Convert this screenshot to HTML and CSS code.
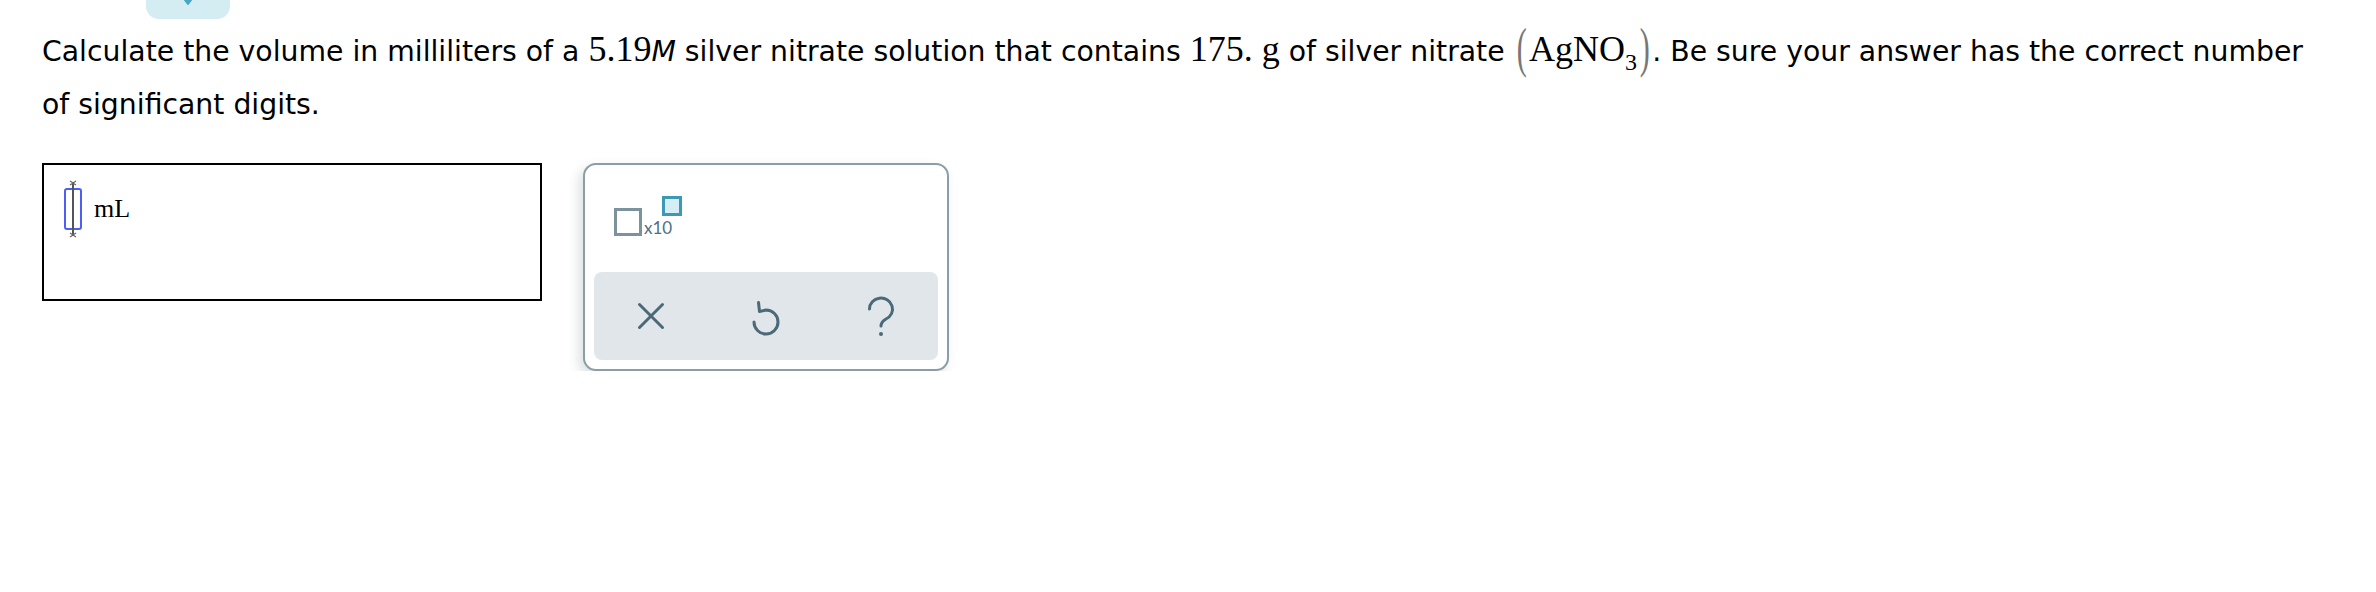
FILE: index.html
```html
<!DOCTYPE html>
<html lang="en">
<head>
    <meta charset="UTF-8">
    <meta name="viewport" content="width=device-width, initial-scale=1.0">
    <title>Molarity Question</title>
    <link rel="stylesheet" href="styles.css">
</head>
<body>
    <div class="tab-handle">
        <svg class="tab-arrow" width="16" height="6" viewBox="0 0 16 6"><path d="M2 -4 L8 4 L14 -4 Z" fill="#47a6c6" stroke="#47a6c6" stroke-width="2" stroke-linejoin="round"/></svg>
    </div>

    <div class="question">
        <p class="prompt">Calculate the volume in milliliters of a <span class="math">5.19</span><span class="unit-m">M</span> silver nitrate solution that contains <span class="math">175.</span> <span class="math">g</span> of silver nitrate <span class="paren">(</span><span class="math">AgNO<sub>3</sub></span><span class="paren">)</span>. Be sure your answer has the correct number of significant digits.</p>

        <div class="answer-row">
            <div class="answer-box">
                <svg class="caret" width="22" height="58" viewBox="0 0 22 58">
                    <rect x="3" y="9" width="16" height="40" rx="2" fill="none" stroke="#4b60f2" stroke-width="2"/>
                    <line x1="11" y1="2" x2="11" y2="56" stroke="#555" stroke-width="2"/>
                    <path d="M8 1 L14 5 M14 1 L8 5 M8 53 L14 57 M14 53 L8 57" stroke="#666" stroke-width="1.2"/>
                </svg>
                <span class="unit">mL</span>
            </div>

            <div class="keypad">
                <div class="keypad-top">
                    <button class="sci-btn">
                        <span class="sci-base"></span>
                        <span class="sci-label">x10</span>
                        <span class="sci-exp"></span>
                    </button>
                </div>
                <div class="keypad-actions">
                    <button class="action-btn">
                        <svg width="30" height="30" viewBox="0 0 30 30"><path d="M3.5 3.5 L26.5 26.5 M26.5 3.5 L3.5 26.5" stroke="#4b6979" stroke-width="3" stroke-linecap="round" fill="none"/></svg>
                    </button>
                    <button class="action-btn">
                        <svg width="32" height="40" viewBox="0 0 32 40"><path d="M4 26 A12 12 0 1 0 16 14 L9.5 15.5 M9.5 15.5 L8.5 6.5" stroke="#4b6979" stroke-width="3" stroke-linecap="round" stroke-linejoin="round" fill="none"/></svg>
                    </button>
                    <button class="action-btn">
                        <svg width="30" height="42" viewBox="0 0 30 42"><path d="M3.5 14 A11.5 11 0 1 1 20 24 Q15 27 15 31" stroke="#4b6979" stroke-width="3" stroke-linecap="round" fill="none"/><circle cx="15" cy="39" r="2" fill="#4b6979"/></svg>
                    </button>
                </div>
            </div>
        </div>
    </div>
</body>
</html>
```

FILE: styles.css
```css
body {
    margin: 0;
    padding: 0;
    background-color: white;
    color: black;
    font-family: "DejaVu Sans", Verdana, sans-serif;
}
.tab-handle {
    width: 84px;
    height: 19px;
    margin-left: 146px;
    background-color: #d4edf3;
    border-radius: 0 0 13px 13px;
    display: flex;
    justify-content: center;
}
.tab-arrow {
    display: block;
}
.question {
    padding-left: 42px;
}
.prompt {
    width: 2275px;
    margin: 6px 0 0 0;
    font-size: 28.3px;
    line-height: 53px;
}
.math {
    font-family: "Liberation Serif", "Times New Roman", serif;
    font-size: 36px;
    line-height: 1;
}
.math sub {
    font-size: 24px;
    line-height: 1;
    vertical-align: -9px;
}
.unit-m {
    font-style: italic;
}
.paren {
    display: inline-block;
    font-family: "Liberation Serif", serif;
    font-size: 40px;
    line-height: 1;
    color: #777;
    transform: scale(0.75, 1.35);
    margin: 0 1px;
}
.answer-row {
    display: flex;
    align-items: flex-start;
    gap: 41px;
    margin-top: 32px;
}
.answer-box {
    box-sizing: border-box;
    width: 500px;
    height: 138px;
    border: 2px solid black;
    padding: 15px 0 0 18px;
    display: flex;
    align-items: flex-start;
}
.caret {
    display: block;
}
.unit {
    font-family: "Liberation Serif", "Times New Roman", serif;
    font-size: 26px;
    margin-left: 10px;
    margin-top: 14px;
}
.keypad {
    box-sizing: border-box;
    width: 366px;
    padding: 9px;
    border: 2px solid #8a9ea6;
    border-radius: 13px;
    background-color: white;
    box-shadow: -4px 5px 12px rgba(40, 60, 70, 0.16);
}
.keypad-top {
    height: 98px;
    box-sizing: border-box;
    padding: 34px 0 0 20px;
}
button {
    border: none;
    background: none;
    padding: 0;
    margin: 0;
    cursor: pointer;
}
.sci-btn {
    position: relative;
    display: flex;
    align-items: flex-end;
}
.sci-base {
    box-sizing: border-box;
    width: 28px;
    height: 28px;
    border: 3px solid #7d939b;
}
.sci-label {
    font-family: Lato, "Open Sans", sans-serif;
    font-size: 17px;
    line-height: 14px;
    color: #51707f;
    margin-left: 2px;
    margin-bottom: 1px;
}
.sci-exp {
    position: absolute;
    left: 48px;
    top: -12px;
    box-sizing: border-box;
    width: 20px;
    height: 20px;
    border: 3px solid #3c98b4;
    background-color: #d5eef4;
}
.keypad-actions {
    height: 88px;
    border-radius: 8px;
    background-color: #e0e6e9;
    display: grid;
    grid-template-columns: 1fr 1fr 1fr;
}
.action-btn {
    display: flex;
    justify-content: center;
    align-items: center;
}
.action-btn svg {
    display: block;
}
```
